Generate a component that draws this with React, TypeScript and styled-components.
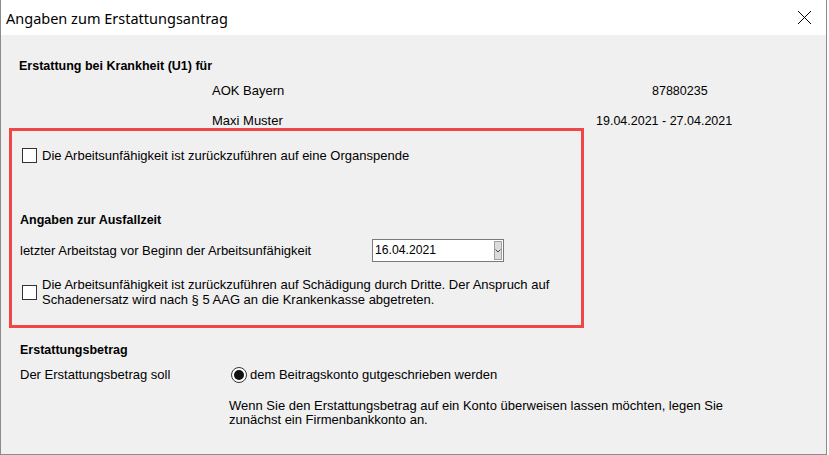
import React from "react";
import styled, { createGlobalStyle } from "styled-components";

const Global = createGlobalStyle`
  html, body { margin: 0; padding: 0; background: #ffffff; }
  body { font-family: "Liberation Sans", Arial, sans-serif; font-size: 13px; color: #000; }
`;

const Window = styled.div`
  box-sizing: border-box;
  width: 827px;
  height: 455px;
  border: 1px solid #8c8c8c;
  border-top: none;
  display: flex;
  flex-direction: column;
  background: #f0f0f0;
`;

const TitleBar = styled.div`
  height: 35px;
  flex: 0 0 35px;
  background: #ffffff;
  display: flex;
  align-items: center;
  justify-content: space-between;
  padding: 0 14px 0 5px;
`;

const Title = styled.div`
  font-family: "Noto Sans", "Open Sans", sans-serif;
  font-size: 14.5px;
  color: #000;
  line-height: 18px;
  margin-top: 1px;
`;

const Body = styled.div`
  flex: 1;
  padding-top: 24px;
  display: flex;
  flex-direction: column;
`;

const Heading = styled.div<{ $mt?: number; $ml?: number }>`
  font-weight: bold;
  font-size: 12.5px;
  line-height: 14px;
  margin-top: ${(p) => p.$mt ?? 0}px;
  margin-left: ${(p) => p.$ml ?? 0}px;
`;

const InfoList = styled.div`
  display: flex;
  flex-direction: column;
  gap: 16px;
  margin-top: 11px;
  padding-left: 211px;
`;

const InfoRow = styled.div`
  display: flex;
  line-height: 14px;
`;

const InfoName = styled.div`
  width: 384px;
`;

const InfoValue = styled.div<{ $indent?: number }>`
  font-size: 12.5px;
  padding-left: ${(p) => p.$indent ?? 0}px;
`;

const Highlight = styled.div`
  box-sizing: border-box;
  margin-left: 8px;
  width: 575px;
  height: 200px;
  border: 3px solid #ef4646;
  padding: 17px 0 0 8px;
  display: flex;
  flex-direction: column;
`;

const CheckRow = styled.label<{ $mt?: number }>`
  display: flex;
  align-items: center;
  gap: 5px;
  margin-left: 2px;
  margin-top: ${(p) => p.$mt ?? 0}px;
  line-height: 15px;
`;

const Box = styled.span`
  box-sizing: border-box;
  flex: 0 0 15px;
  width: 15px;
  height: 15px;
  border: 1.5px solid #333333;
  background: #ffffff;
`;

const FieldRow = styled.div<{ $mt?: number; $ml?: number }>`
  display: flex;
  align-items: center;
  margin-top: ${(p) => p.$mt ?? 0}px;
  margin-left: ${(p) => p.$ml ?? 0}px;
  line-height: 14px;
`;

const FieldLabel = styled.div<{ $w: number }>`
  width: ${(p) => p.$w}px;
  flex: 0 0 ${(p) => p.$w}px;
`;

const DateBox = styled.div`
  box-sizing: border-box;
  width: 132px;
  height: 23px;
  border: 1px solid #7a7a7a;
  background: #ffffff;
  display: flex;
  align-items: stretch;
`;

const DateText = styled.div`
  flex: 1;
  font-size: 12.2px;
  line-height: 21px;
  padding-left: 2px;
`;

const DropButton = styled.div`
  box-sizing: border-box;
  width: 8px;
  margin: 1px;
  background: #dcdcdc;
  border: 1px solid #a0a0a0;
  display: flex;
  align-items: center;
  justify-content: center;
`;

const Radio = styled.span`
  box-sizing: border-box;
  flex: 0 0 16px;
  width: 16px;
  height: 16px;
  border-radius: 50%;
  border: 1px solid #333333;
  background: #ffffff;
  display: flex;
  align-items: center;
  justify-content: center;
  margin-right: 3px;
  &::after {
    content: "";
    width: 10px;
    height: 10px;
    border-radius: 50%;
    background: #111111;
  }
`;

const Note = styled.div`
  margin-top: 16px;
  margin-left: 228px;
  line-height: 14px;
`;

export default function App() {
  return (
    <>
      <Global />
      <Window>
        <TitleBar>
          <Title>Angaben zum Erstattungsantrag</Title>
          <svg width="15" height="15" viewBox="0 0 15 15">
            <path d="M1 1 L14 14 M14 1 L1 14" stroke="#000" strokeWidth="1" fill="none" />
          </svg>
        </TitleBar>
        <Body>
          <Heading $ml={18}>Erstattung bei Krankheit (U1) für</Heading>
          <InfoList>
            <InfoRow>
              <InfoName>AOK Bayern</InfoName>
              <InfoValue $indent={56}>87880235</InfoValue>
            </InfoRow>
            <InfoRow>
              <InfoName>Maxi Muster</InfoName>
              <InfoValue>19.04.2021 - 27.04.2021</InfoValue>
            </InfoRow>
          </InfoList>
          <Highlight>
            <CheckRow>
              <Box />
              <span>Die Arbeitsunfähigkeit ist zurückzuführen auf eine Organspende</span>
            </CheckRow>
            <Heading $mt={50}>Angaben zur Ausfallzeit</Heading>
            <FieldRow $mt={12}>
              <FieldLabel $w={352}>letzter Arbeitstag vor Beginn der Arbeitsunfähigkeit</FieldLabel>
              <DateBox>
                <DateText>16.04.2021</DateText>
                <DropButton>
                  <svg width="6" height="4" viewBox="0 0 6 4">
                    <path d="M0.5 0.5 L3 3 L5.5 0.5" stroke="#444" strokeWidth="1" fill="none" />
                  </svg>
                </DropButton>
              </DateBox>
            </FieldRow>
            <CheckRow $mt={15}>
              <Box />
              <span>
                Die Arbeitsunfähigkeit ist zurückzuführen auf Schädigung durch Dritte. Der Anspruch auf
                <br />
                Schadenersatz wird nach § 5 AAG an die Krankenkasse abgetreten.
              </span>
            </CheckRow>
          </Highlight>
          <Heading $mt={15} $ml={19}>Erstattungsbetrag</Heading>
          <FieldRow $mt={10} $ml={19}>
            <FieldLabel $w={211}>Der Erstattungsbetrag soll</FieldLabel>
            <Radio />
            <span>dem Beitragskonto gutgeschrieben werden</span>
          </FieldRow>
          <Note>
            Wenn Sie den Erstattungsbetrag auf ein Konto überweisen lassen möchten, legen Sie
            <br />
            zunächst ein Firmenbankkonto an.
          </Note>
        </Body>
      </Window>
    </>
  );
}
